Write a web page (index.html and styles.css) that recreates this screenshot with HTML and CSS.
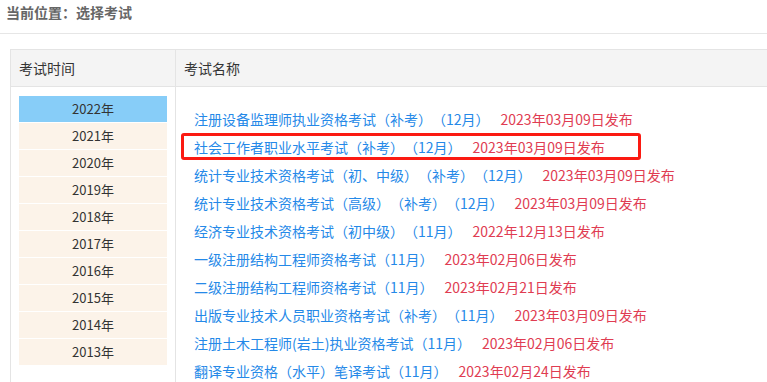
FILE: index.html
```html
<!DOCTYPE html>
<html lang="zh-CN">
<head>
    <meta charset="UTF-8">
    <meta name="viewport" content="width=device-width, initial-scale=1.0">
    <title>选择考试</title>
    <link rel="stylesheet" href="styles.css">
</head>
<body>
    <div class="crumb">当前位置：选择考试</div>

    <div class="exam-table">
        <div class="head">
            <div class="col-time">考试时间</div>
            <div class="col-name">考试名称</div>
        </div>
        <div class="body">
            <ul class="years">
                <li class="active">2022年</li>
                <li>2021年</li>
                <li>2020年</li>
                <li>2019年</li>
                <li>2018年</li>
                <li>2017年</li>
                <li>2016年</li>
                <li>2015年</li>
                <li>2014年</li>
                <li>2013年</li>
            </ul>
            <ul class="exams">
                <li><a href="#">注册设备监理师执业资格考试（补考）（12月）</a><span class="date">2023年03月09日发布</span></li>
                <li><span class="marked"><a href="#">社会工作者职业水平考试（补考）（12月）</a><span class="date">2023年03月09日发布</span></span></li>
                <li><a href="#">统计专业技术资格考试（初、中级）（补考）（12月）</a><span class="date">2023年03月09日发布</span></li>
                <li><a href="#">统计专业技术资格考试（高级）（补考）（12月）</a><span class="date">2023年03月09日发布</span></li>
                <li><a href="#">经济专业技术资格考试（初中级）（11月）</a><span class="date">2022年12月13日发布</span></li>
                <li><a href="#">一级注册结构工程师资格考试（11月）</a><span class="date">2023年02月06日发布</span></li>
                <li><a href="#">二级注册结构工程师资格考试（11月）</a><span class="date">2023年02月21日发布</span></li>
                <li><a href="#">出版专业技术人员职业资格考试（补考）（11月）</a><span class="date">2023年03月09日发布</span></li>
                <li><a href="#">注册土木工程师(岩土)执业资格考试（11月）</a><span class="date">2023年02月06日发布</span></li>
                <li><a href="#">翻译专业资格（水平）笔译考试（11月）</a><span class="date">2023年02月24日发布</span></li>
            </ul>
        </div>
    </div>
</body>
</html>
```

FILE: styles.css
```css
body {
    font-family: "Noto Sans CJK SC", "Noto Sans", sans-serif;
    font-size: 14px;
    color: #333;
    margin: 0;
    overflow: hidden;
    text-spacing-trim: space-all;
}
ul {
    list-style: none;
    margin: 0;
    padding: 0;
}
a {
    text-decoration: none;
}
.crumb {
    height: 24px;
    line-height: 24px;
    padding: 0 6px 9px;
    border-bottom: 1px solid #e6e6e6;
    color: #666;
    font-weight: bold;
    margin-bottom: 15px;
}
.exam-table {
    margin-left: 10px;
    border: 1px solid #e4e4e4;
    border-right: none;
}
.head {
    display: flex;
    height: 36px;
    line-height: 36px;
    background-color: #f4f4f4;
    border-bottom: 1px solid #e4e4e4;
}
.col-time {
    width: 156px;
    padding-left: 8px;
    border-right: 1px solid #e4e4e4;
}
.col-name {
    padding-left: 8px;
}
.body {
    display: flex;
}
.years {
    width: 148px;
    padding: 9px 8px 20px;
    border-right: 1px solid #e4e4e4;
}
.years li {
    height: 26px;
    line-height: 26px;
    margin-bottom: 1px;
    text-align: center;
    font-size: 13px;
    background-color: #fcf3e9;
}
.years li.active {
    background-color: #87cdf8;
}
.exams {
    padding: 18px 0 0 18px;
}
.exams li {
    height: 28px;
    line-height: 28px;
    white-space: nowrap;
}
.exams a {
    color: #2589e8;
}
.date {
    color: #e03c52;
    margin-left: 11px;
}
.marked {
    position: relative;
    display: inline-block;
}
.marked::after {
    content: "";
    position: absolute;
    left: -13px;
    right: -36px;
    top: 0;
    bottom: 1px;
    border: 3px solid #fb1a12;
    border-radius: 3px;
}
```
